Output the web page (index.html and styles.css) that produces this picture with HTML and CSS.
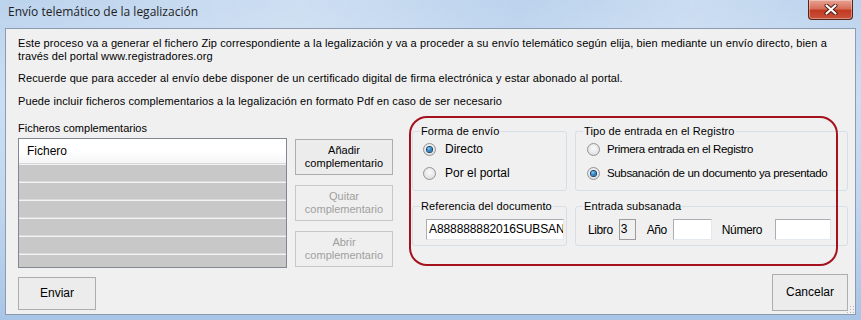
FILE: index.html
```html
<!DOCTYPE html>
<html lang="es">
<head>
    <meta charset="UTF-8">
    <title>Envío telemático de la legalización</title>
    <link rel="stylesheet" href="styles.css">
</head>

<body>

    <div class="window">
        <div class="titlebar">
            <span class="title">Envío telemático de la legalización</span>
            <button class="close" aria-label="Cerrar">
                <svg width="14" height="11" viewBox="0 0 14 11">
                    <path d="M2.5 1.5 L11.5 9.5 M11.5 1.5 L2.5 9.5" stroke="#4a1a12" stroke-width="4" stroke-linecap="round"></path>
                    <path d="M2.5 1.5 L11.5 9.5 M11.5 1.5 L2.5 9.5" stroke="#ffffff" stroke-width="2.2" stroke-linecap="round"></path>
                </svg>
            </button>
        </div>

        <div class="client">
            <div class="intro">
                <p>Este proceso va a generar el fichero Zip correspondiente a la legalización y va a proceder a su envío telemático según elija, bien mediante un envío directo, bien a<br>través del portal www.registradores.org</p>
                <p>Recuerde que para acceder al envío debe disponer de un certificado digital de firma electrónica y estar abonado al portal.</p>
                <p>Puede incluir ficheros complementarios a la legalización en formato Pdf en caso de ser necesario</p>
            </div>

            <div class="main">
                <div class="files">
                    <div class="files-label">Ficheros complementarios</div>
                    <div class="files-row">
                        <div class="grid">
                            <div class="grid-head">Fichero</div>
                            <div class="grid-row"></div>
                            <div class="grid-row"></div>
                            <div class="grid-row"></div>
                            <div class="grid-row"></div>
                            <div class="grid-row"></div>
                            <div class="grid-row"></div>
                        </div>
                        <div class="side-buttons">
                            <button class="btn">Añadir<br>complementario</button>
                            <button class="btn" disabled>Quitar<br>complementario</button>
                            <button class="btn" disabled>Abrir<br>complementario</button>
                        </div>
                    </div>
                    <button class="btn btn-send">Enviar</button>
                </div>

                <div class="options">
                    <div class="groups">
                        <fieldset class="group group-top">
                            <legend>Forma de envío</legend>
                            <div class="radio checked"><span class="dot"></span>Directo</div>
                            <div class="radio"><span class="dot"></span>Por el portal</div>
                        </fieldset>
                        <fieldset class="group group-top group-type">
                            <legend>Tipo de entrada en el Registro</legend>
                            <div class="radio"><span class="dot"></span>Primera entrada en el Registro</div>
                            <div class="radio checked"><span class="dot"></span>Subsanación de un documento ya presentado</div>
                        </fieldset>
                        <fieldset class="group group-bottom">
                            <legend>Referencia del documento</legend>
                            <div class="field field-ref">A888888882016SUBSANA</div>
                        </fieldset>
                        <fieldset class="group group-bottom">
                            <legend>Entrada subsanada</legend>
                            <div class="entry-row">
                                <span class="entry-label">Libro</span>
                                <div class="field field-book">3</div>
                                <span class="entry-label">Año</span>
                                <div class="field field-year"></div>
                                <span class="entry-label label-num">Número</span>
                                <div class="field field-num"></div>
                            </div>
                        </fieldset>
                    </div>
                    <div class="actions">
                        <button class="btn btn-cancel">Cancelar</button>
                    </div>
                </div>
            </div>

            <!-- red annotation drawn over the options -->
            <div class="highlight"></div>
            <div class="grip"></div>
        </div>
    </div>

</body>
</html>
```

FILE: styles.css
```css
/* Windows 7 dialog */

:root {
    --face: #f0f0f0;
    --text: #000000;
    --disabled: #a0a0a0;
    --btn-border: #adadad;
    --group-border: #d5dfe5;
    --mark: #a5121d;
}

body {
    margin: 0;
    width: 861px;
    height: 320px;
    overflow: hidden;
    font-family: 'Liberation Sans', Arial, sans-serif;
    font-size: 11px;
    color: var(--text);
    background: linear-gradient(to bottom, #bcd3ed 0%, #cbdef3 30%, #c3d8ef 60%, #a9c5e6 100%);
}

.window {
    height: 320px;
    display: flex;
    flex-direction: column;
}

/* Title bar */
.titlebar {
    height: 28px;
    display: flex;
    justify-content: space-between;
    align-items: flex-start;
    padding: 0 8px 0 8px;
    box-sizing: border-box;
    background: linear-gradient(100deg, rgba(255,255,255,0) 0%, rgba(255,255,255,0.25) 35%, rgba(255,255,255,0) 60%, rgba(255,255,255,0.2) 80%, rgba(255,255,255,0) 100%);
}

.title {
    font-family: 'Open Sans', 'Noto Sans', sans-serif;
    font-size: 12px;
    line-height: 16px;
    margin-top: 4px;
    color: #1e1e1e;
}

.close {
    width: 45px;
    height: 20px;
    margin: 0;
    padding: 0;
    border: 1px solid #5a2318;
    border-top: none;
    border-radius: 0 0 4px 4px;
    background: linear-gradient(to bottom, #e8a393 0%, #d66f5a 45%, #c23a22 55%, #c9523a 100%);
    box-shadow: inset 0 0 0 1px rgba(255,255,255,0.35);
    display: flex;
    align-items: center;
    justify-content: center;
}

/* Client area */
.client {
    position: relative;
    margin: 0 5px;
    height: 287px;
    box-sizing: border-box;
    border: 1px solid #8b9bb0;
    background: var(--face);
}

.intro {
    padding: 8px 12px 0 12px;
}

.intro p {
    margin: 0 0 10px 0;
    line-height: 13px;
    white-space: nowrap;
    letter-spacing: 0.1px;
}

.intro p:first-child {
    margin-bottom: 9px;
}

.main {
    display: flex;
    gap: 19px;
    padding: 2px 0 0 12px;
}

/* Left: complementary files */
.files {
    width: 375px;
    padding-top: 2px;
}

.files-label {
    line-height: 13px;
    margin-bottom: 3px;
}

.files-row {
    display: flex;
    gap: 8px;
}

.grid {
    width: 269px;
    height: 130px;
    box-sizing: border-box;
    border: 1px solid #828790;
    background: #c8c8c8;
    overflow: hidden;
}

.grid-head {
    height: 24px;
    line-height: 24px;
    padding-left: 8px;
    font-size: 12px;
    background: linear-gradient(to bottom, #ffffff 0%, #ffffff 50%, #f5f5f7 100%);
    border-bottom: 1px solid #d8d8d8;
}

.grid-row {
    height: 16px;
    border-top: 1px solid #f4f4f4;
    border-bottom: 1px solid #dadada;
}

.side-buttons {
    display: flex;
    flex-direction: column;
    gap: 10px;
    padding-top: 1px;
}

.btn {
    font-family: 'Liberation Sans', Arial, sans-serif;
    font-size: 11px;
    line-height: 13px;
    color: var(--text);
    background: #ececec;
    border: 1px solid var(--btn-border);
    border-radius: 0;
    padding: 0;
    margin: 0;
}

.side-buttons .btn {
    width: 98px;
    height: 36px;
}

.btn:disabled {
    color: var(--disabled);
    border-color: #c7c7c7;
    background: #efefef;
}

.btn-send {
    width: 78px;
    height: 33px;
    margin-top: 9px;
    font-size: 12px;
}

/* Right: options */
.options {
    width: 436px;
    padding-top: 4px;
}

.groups {
    display: grid;
    grid-template-columns: 155px 273px;
    column-gap: 8px;
    row-gap: 8px;
}

.group {
    margin: 0;
    padding: 0 0 0 9px;
    min-width: 0;
    border: 1px solid var(--group-border);
    border-radius: 3px;
    box-sizing: border-box;
    font-family: 'Liberation Sans', Arial, sans-serif;
    font-size: 12px;
}

.group legend {
    padding: 0 1px;
    margin-left: -2px;
    line-height: 14px;
    font-size: 11px;
    letter-spacing: 0.1px;
}

.group-top {
    height: 67px;
    padding-top: 1px;
}

.group-bottom {
    height: 47px;
}

.radio {
    display: flex;
    align-items: center;
    height: 20px;
    margin-bottom: 4px;
    padding-left: 1px;
    white-space: nowrap;
}

.dot {
    width: 11px;
    height: 11px;
    margin-right: 9px;
    border: 1px solid #939393;
    border-radius: 50%;
    background: radial-gradient(circle at 50% 40%, #fbfbfb 0%, #e6e6e6 60%, #d4d4d4 100%);
    display: flex;
    align-items: center;
    justify-content: center;
    flex-shrink: 0;
}

.radio.checked .dot::after {
    content: "";
    width: 5px;
    height: 5px;
    border-radius: 50%;
    background: radial-gradient(circle at 40% 35%, #8fd0f4 0%, #2a86c6 45%, #0f4e86 100%);
    box-shadow: 0 0 0 1px #1b3f6b;
}

.group-type .radio {
    padding-left: 2px;
    font-size: 11.5px;
    letter-spacing: -0.35px;
}

.group-type .dot {
    margin-right: 7px;
}

.field {
    box-sizing: border-box;
    height: 21px;
    border: 1px solid #7a7a7a;
    border-color: #abadb3 #e3e9ef #e3e9ef #abadb3;
    background: #ffffff;
    font-family: 'Liberation Sans', Arial, sans-serif;
    font-size: 12px;
    line-height: 19px;
    padding-left: 2px;
    overflow: hidden;
    white-space: nowrap;
}

.field-ref {
    width: 138px;
    margin: 6px 0 0 4px;
    letter-spacing: -0.1px;
}

.entry-row {
    display: flex;
    align-items: center;
    margin-top: 6px;
    padding-left: 3px;
}

.entry-label {
    font-size: 12px;
    letter-spacing: -0.4px;
    margin-right: 6px;
}

.field-book {
    width: 17px;
    background: var(--face);
    border-color: #9c9c9c;
    padding-left: 1px;
    margin-right: 11px;
}

.field-year {
    width: 39px;
    margin-right: 10px;
}

.label-num {
    margin-right: 13px;
}

.field-num {
    width: 56px;
}

.actions {
    display: flex;
    justify-content: flex-end;
    margin-top: 28px;
}

.btn-cancel {
    width: 76px;
    height: 37px;
    font-size: 12px;
}

/* Annotation and size grip */
.highlight {
    position: absolute;
    left: 403px;
    top: 87px;
    width: 429px;
    height: 150px;
    box-sizing: border-box;
    border: 2px solid var(--mark);
    border-radius: 18px;
    pointer-events: none;
}

.grip {
    position: absolute;
    right: 1px;
    bottom: 1px;
    width: 8px;
    height: 8px;
    background-image: radial-gradient(circle, #b5b5b5 0.8px, transparent 1px);
    background-size: 3px 3px;
}
```
